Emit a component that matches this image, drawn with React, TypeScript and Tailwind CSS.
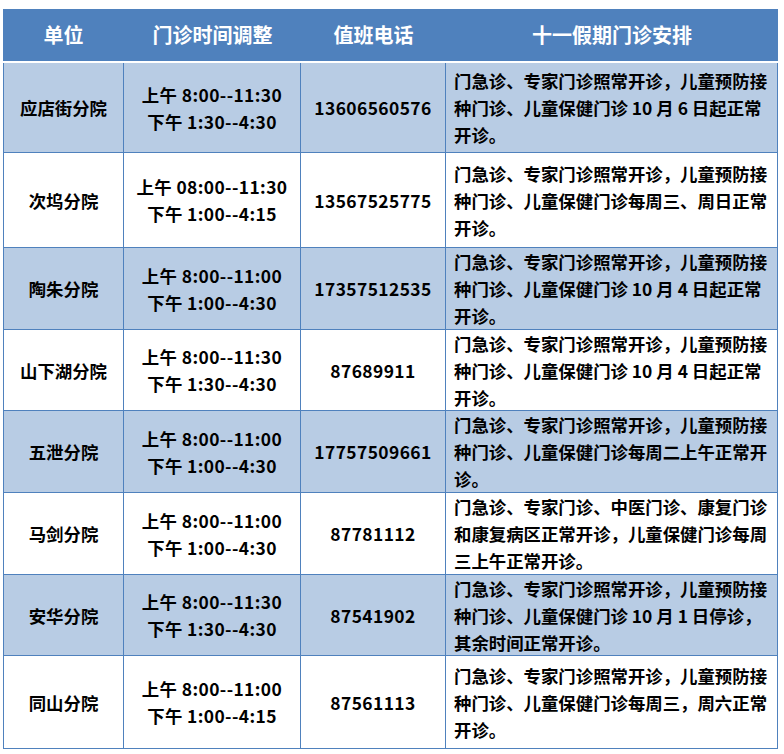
import React from "react";

type Row = {
  name: string;
  am: string;
  pm: string;
  phone: string;
  lines: string[];
  h: string;
  bg: string;
};

const rows: Row[] = [
  {
    name: "应店街分院",
    am: "上午 8:00--11:30",
    pm: "下午 1:30--4:30",
    phone: "13606560576",
    lines: ["门急诊、专家门诊照常开诊，儿童预防接", "种门诊、儿童保健门诊 10 月 6 日起正常", "开诊。"],
    h: "h-[90px]",
    bg: "bg-[#b8cce4]",
  },
  {
    name: "次坞分院",
    am: "上午 08:00--11:30",
    pm: "下午 1:00--4:15",
    phone: "13567525775",
    lines: ["门急诊、专家门诊照常开诊，儿童预防接", "种门诊、儿童保健门诊每周三、周日正常", "开诊。"],
    h: "h-[95px]",
    bg: "bg-white",
  },
  {
    name: "陶朱分院",
    am: "上午 8:00--11:00",
    pm: "下午 1:00--4:30",
    phone: "17357512535",
    lines: ["门急诊、专家门诊照常开诊，儿童预防接", "种门诊、儿童保健门诊 10 月 4 日起正常", "开诊。"],
    h: "h-[82px]",
    bg: "bg-[#b8cce4]",
  },
  {
    name: "山下湖分院",
    am: "上午 8:00--11:30",
    pm: "下午 1:30--4:30",
    phone: "87689911",
    lines: ["门急诊、专家门诊照常开诊，儿童预防接", "种门诊、儿童保健门诊 10 月 4 日起正常", "开诊。"],
    h: "h-[81px]",
    bg: "bg-white",
  },
  {
    name: "五泄分院",
    am: "上午 8:00--11:00",
    pm: "下午 1:00--4:30",
    phone: "17757509661",
    lines: ["门急诊、专家门诊照常开诊，儿童预防接", "种门诊、儿童保健门诊每周二上午正常开", "诊。"],
    h: "h-[82px]",
    bg: "bg-[#b8cce4]",
  },
  {
    name: "马剑分院",
    am: "上午 8:00--11:00",
    pm: "下午 1:00--4:30",
    phone: "87781112",
    lines: ["门急诊、专家门诊、中医门诊、康复门诊", "和康复病区正常开诊，儿童保健门诊每周", "三上午正常开诊。"],
    h: "h-[82px]",
    bg: "bg-white",
  },
  {
    name: "安华分院",
    am: "上午 8:00--11:30",
    pm: "下午 1:30--4:30",
    phone: "87541902",
    lines: ["门急诊、专家门诊照常开诊，儿童预防接", "种门诊、儿童保健门诊 10 月 1 日停诊，", "其余时间正常开诊。"],
    h: "h-[81px]",
    bg: "bg-[#b8cce4]",
  },
  {
    name: "同山分院",
    am: "上午 8:00--11:00",
    pm: "下午 1:00--4:15",
    phone: "87561113",
    lines: ["门急诊、专家门诊照常开诊，儿童预防接", "种门诊、儿童保健门诊每周三，周六正常", "开诊。"],
    h: "h-[93px]",
    bg: "bg-white",
  },
];

export default function App() {
  return (
    <div
      className="w-[784px] h-[754px] bg-white pt-[9px] pl-[3px] text-black font-bold"
      style={{ fontFamily: '"Noto Sans CJK SC", "Noto Sans", sans-serif' }}
    >
      <div className="w-[775px]">
        <div className="flex h-[52px] bg-[#4f81bd] text-white text-[20px] items-center">
          <div className="w-[121px] text-center">单位</div>
          <div className="w-[177px] text-center">门诊时间调整</div>
          <div className="w-[145px] text-center">值班电话</div>
          <div className="flex-1 text-center">十一假期门诊安排</div>
        </div>
        <div className="h-[2px] bg-white" />
        {rows.map((r) => (
          <div
            key={r.name}
            className={`flex border-l border-b border-[#4f81bd] ${r.h} ${r.bg} text-[17.4px] leading-[27px]`}
          >
            <div className="w-[120px] border-r border-[#4f81bd] flex items-center justify-center">
              {r.name}
            </div>
            <div className="w-[177px] border-r border-[#4f81bd] flex flex-col items-center justify-center tracking-[0.4px]">
              <div>{r.am}</div>
              <div>{r.pm}</div>
            </div>
            <div className="w-[145px] border-r border-[#4f81bd] flex items-center justify-center tracking-[0.4px]">
              {r.phone}
            </div>
            <div className="flex-1 border-r border-[#4f81bd] flex flex-col justify-center pl-[8px] whitespace-nowrap">
              {r.lines.map((l, i) => (
                <div key={i}>{l}</div>
              ))}
            </div>
          </div>
        ))}
      </div>
    </div>
  );
}
